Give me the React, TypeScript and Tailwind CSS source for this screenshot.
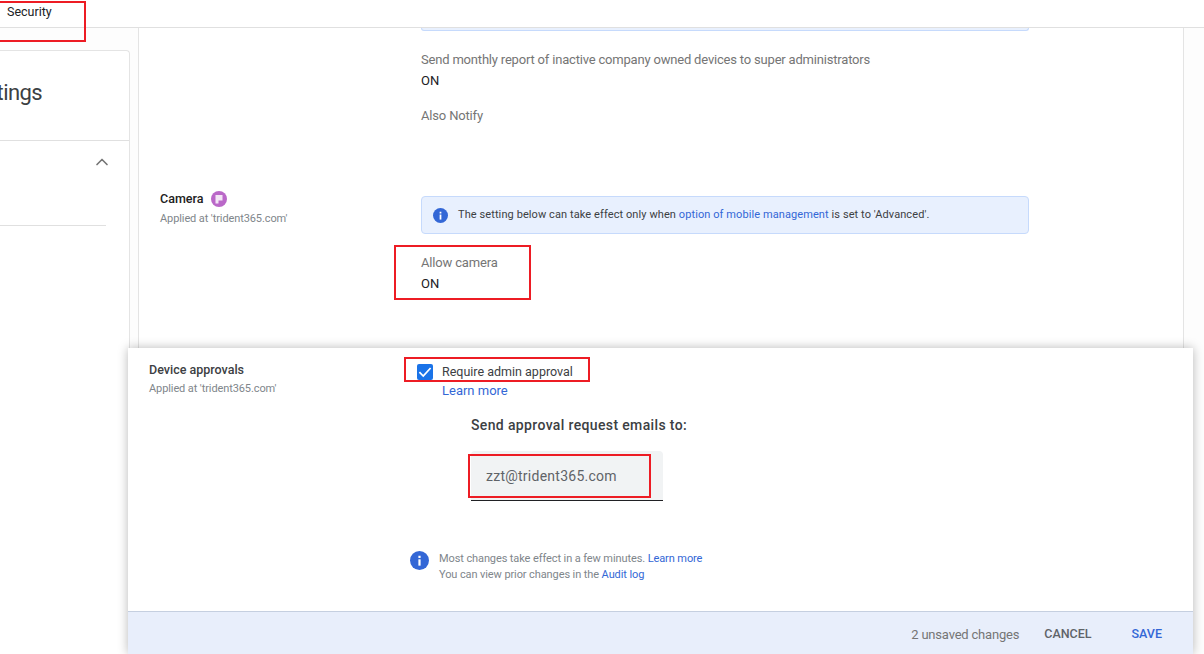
import { ChevronUp } from "lucide-react";

function InfoDot({ size }: { size: number }) {
  return (
    <svg width={size} height={size} viewBox="0 0 24 24" className="shrink-0">
      <circle cx="12" cy="12" r="12" fill="#3367d6" />
      <rect x="10.6" y="10.5" width="2.8" height="8" fill="#fff" />
      <rect x="10.6" y="6" width="2.8" height="2.8" fill="#fff" />
    </svg>
  );
}

function FlagBadge() {
  return (
    <svg width="16" height="16" viewBox="0 0 16 16" className="shrink-0">
      <circle cx="8" cy="8" r="8" fill="#ba68c8" />
      <path d="M4.5 4h7v5.5H7.5V12.5H4.5z" fill="#f3e5f5" />
    </svg>
  );
}

// annotation rectangles drawn on top of the screenshot
const redBoxes = [
  "left-[-2px] top-[1px] w-[88px] h-[41px]",
  "left-[394px] top-[245px] w-[137px] h-[55px]",
  "left-[404px] top-[357px] w-[186px] h-[25px]",
  "left-[468px] top-[454px] w-[183px] h-[44px]",
];

export default function App() {
  return (
    <div className="relative h-[654px] w-[1204px] overflow-hidden bg-[#fdfdfd] font-['Roboto',sans-serif]">
      {/* Top bar */}
      <header className="h-[28px] border-b border-[#e0e0e0] bg-white pl-[7px] pt-[4px] text-[12.5px] leading-[16px] text-[#202124]">
        Security
      </header>

      <div className="flex h-[626px] items-start">
        {/* Left card */}
        <aside className="mt-[22px] h-[604px] w-[130px] shrink-0 overflow-hidden rounded-tr border-r border-t border-[#e4e4e4] bg-white">
          <div className="flex h-[90px] justify-end border-b border-[#e0e0e0] pr-[87px] pt-[27px] text-[22px] leading-[30px] tracking-[-0.6px] text-[#3c4043]">
            <span className="whitespace-nowrap">Settings</span>
          </div>
          <div className="mr-[23px] flex h-[85px] items-start justify-end border-b border-[#e0e0e0] pt-[11px]">
            <ChevronUp size={20} strokeWidth={2} className="mr-[-6px] text-[#757575]" />
          </div>
        </aside>

        {/* Main panel */}
        <main className="ml-[8px] h-[626px] w-[1046px] shrink-0 border-x border-[#e4e4e4] bg-white">
          <div className="ml-[282px] h-[3px] w-[608px] rounded-b border-x border-b border-[#c6dafc] bg-[#e8f0fe]"></div>

          <div className="pl-[282px] pt-[21px]">
            <p className="text-[13px] leading-[16px] tracking-[-0.19px] text-[#757575]">
              Send monthly report of inactive company owned devices to super administrators
            </p>
            <p className="mt-[5px] text-[13px] leading-[16px] text-[#202124]">ON</p>
            <p className="mt-[19px] text-[13px] leading-[16px] tracking-[-0.17px] text-[#757575]">Also Notify</p>
          </div>

          <div className="mt-[65px] flex">
            <div className="w-[282px] shrink-0 pl-[21px]">
              <div className="flex items-center gap-[8px] pt-[2px]">
                <span className="text-[12.5px] font-medium leading-[16px] text-[#212121]">Camera</span>
                <FlagBadge />
              </div>
              <p className="mt-[5px] text-[11px] leading-[14px] tracking-[-0.1px] text-[#80868b]">
                Applied at 'trident365.com'
              </p>
            </div>
            <div className="pt-[7px]">
              <div className="flex h-[38px] w-[608px] items-center gap-[10px] rounded border border-[#c6dafc] bg-[#e8f0fe] pl-[11px] text-[11px] tracking-[0.09px] text-[#3c4043]">
                <InfoDot size={15} />
                <span>
                  The setting below can take effect only when{" "}
                  <span className="text-[#3367d6]">option of mobile management</span> is set to 'Advanced'.
                </span>
              </div>
              <p className="mt-[21px] text-[13px] leading-[16px] tracking-[-0.17px] text-[#757575]">Allow camera</p>
              <p className="mt-[5px] text-[13px] leading-[16px] text-[#202124]">ON</p>
            </div>
          </div>
        </main>
      </div>

      {/* Sticky save panel, lies over the page */}
      <section className="absolute bottom-0 left-[128px] top-[348px] flex w-[1065px] flex-col bg-white shadow-[0_0_10px_rgba(0,0,0,0.28)]">
        <div className="flex h-[264px] border-b border-[#c5cfe0]">
          <div className="w-[275px] shrink-0 pl-[21px] pt-[14px]">
            <p className="text-[12.5px] font-medium leading-[16px] text-[#3c4043]">Device approvals</p>
            <p className="mt-[4px] text-[11px] leading-[14px] tracking-[-0.1px] text-[#80868b]">
              Applied at 'trident365.com'
            </p>
          </div>
          <div className="pt-[16px]">
            <div className="ml-[14px] flex items-center gap-[9px]">
              <span className="flex h-[16px] w-[16px] items-center justify-center rounded-[2px] bg-[#1a73e8]">
                <svg width="14" height="14" viewBox="0 0 12 12">
                  <path d="M1.2 6.2 4.5 9.5 10.8 2.6" fill="none" stroke="#fff" strokeWidth="1.5" />
                </svg>
              </span>
              <span className="text-[12.5px] leading-[16px] text-[#3c4043]">Require admin approval</span>
            </div>
            <p className="ml-[39px] mt-[3px] text-[13px] leading-[16px] text-[#3367d6]">Learn more</p>
            <p className="ml-[68px] mt-[17px] text-[14px] font-medium leading-[18px] tracking-[0.36px] text-[#3c4043]">
              Send approval request emails to:
            </p>
            <div className="ml-[68px] mt-[17px] flex h-[50px] w-[192px] items-center rounded-t border-b border-[#202124] bg-[#f1f3f4] pt-[2px] pl-[15px] text-[14px] tracking-[0.25px] text-[#5f6368]">
              zzt@trident365.com
            </div>
            <div className="ml-[7px] mt-[50px] flex gap-[10px]">
              <InfoDot size={19} />
              <p className="text-[11px] leading-[16px] tracking-[-0.1px] text-[#80868b]">
                Most changes take effect in a few minutes. <span className="text-[#3367d6]">Learn more</span>
                <br />
                You can view prior changes in the <span className="text-[#3367d6]">Audit log</span>
              </p>
            </div>
          </div>
        </div>
        <div className="flex flex-1 items-center justify-end bg-[#e8eefb] pr-[31px] pt-[3px]">
          <span className="text-[13px] tracking-[-0.2px] text-[#757575]">2 unsaved changes</span>
          <span className="ml-[25px] text-[12.5px] font-medium text-[#5f6368]">CANCEL</span>
          <span className="ml-[40px] text-[12.5px] font-medium text-[#3367d6]">SAVE</span>
        </div>
      </section>

      {redBoxes.map((box) => (
        <div key={box} className={`absolute border-2 border-[#ed1c24] ${box}`}></div>
      ))}
    </div>
  );
}
